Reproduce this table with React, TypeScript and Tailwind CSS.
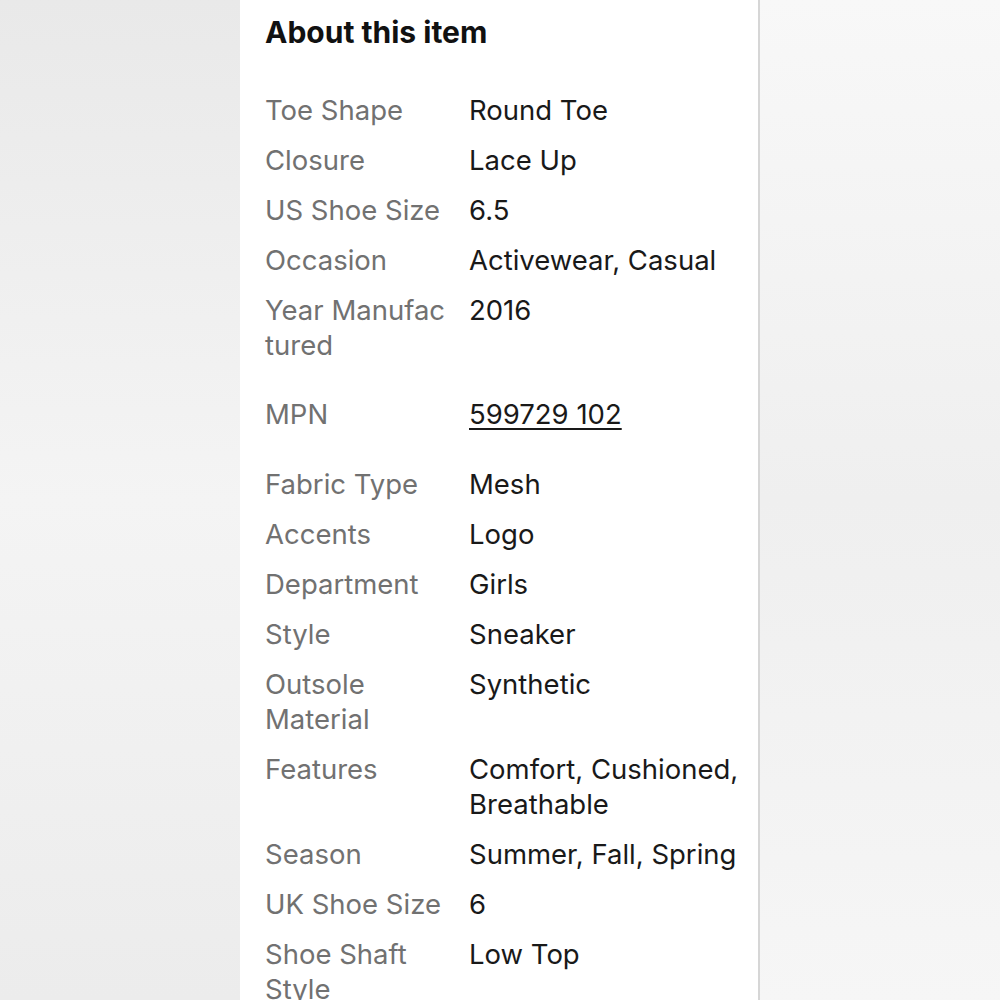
import React from "react";

type Spec = { label: React.ReactNode; value: React.ReactNode; link?: boolean };

const specs: Spec[] = [
  { label: "Toe Shape", value: "Round Toe" },
  { label: "Closure", value: "Lace Up" },
  { label: "US Shoe Size", value: "6.5" },
  { label: "Occasion", value: "Activewear, Casual" },
  { label: <>Year Manufac<br />tured</>, value: "2016" },
  { label: "MPN", value: "599729 102", link: true },
  { label: "Fabric Type", value: "Mesh" },
  { label: "Accents", value: "Logo" },
  { label: "Department", value: "Girls" },
  { label: "Style", value: "Sneaker" },
  { label: <>Outsole<br />Material</>, value: "Synthetic" },
  { label: "Features", value: <>Comfort, Cushioned,<br />Breathable</> },
  { label: "Season", value: "Summer, Fall, Spring" },
  { label: "UK Shoe Size", value: "6" },
  { label: <>Shoe Shaft<br />Style</>, value: "Low Top" },
];

const App = () => {
  return (
    <div className="flex h-[1000px] w-[1000px] overflow-hidden font-['Inter','Liberation_Sans',sans-serif]">
      <div className="w-[240px] shrink-0 bg-gradient-to-b from-[#e9e9e9] via-[#f4f4f4] to-[#ececec]" />

      <div className="w-[520px] shrink-0 rounded-tl-[10px] border-r-2 border-[#d6d6d6] bg-white pl-[25px] pt-[14px]">
        <h2 className="text-[30px] font-bold leading-[36px] text-[#111111]">
          About this item
        </h2>

        <div className="mt-[43px] flex flex-col gap-[15px] text-[27.5px] leading-[35px]">
          {specs.map((s, i) => (
            <div
              key={i}
              className={`flex ${s.link ? "mb-[20px] mt-[19px]" : ""}`}
            >
              <div className="w-[204px] shrink-0 text-[#717171]">{s.label}</div>
              <div className="text-[#191919]">
                {s.link ? (
                  <a href="#" className="underline decoration-[1.5px] underline-offset-[4px]">
                    {s.value}
                  </a>
                ) : (
                  s.value
                )}
              </div>
            </div>
          ))}
        </div>
      </div>

      <div className="flex-1 bg-gradient-to-b from-[#f8f8f8] via-[#efefef] to-[#f6f6f6]" />
    </div>
  );
};

export default App;
